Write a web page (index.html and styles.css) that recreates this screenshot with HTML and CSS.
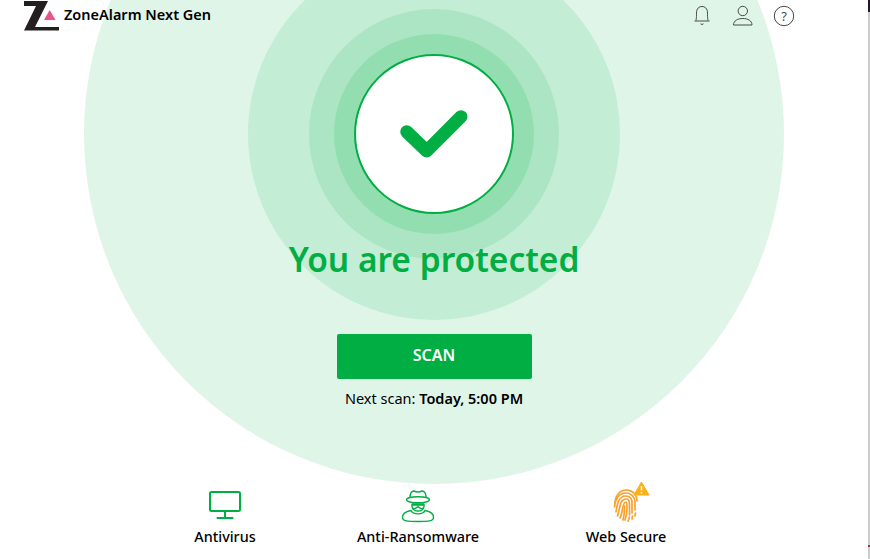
FILE: index.html
```html
<!DOCTYPE html>
<html lang="en">
  <head>
    <meta charset="UTF-8" />
    <meta name="viewport" content="width=device-width, initial-scale=1.0" />
    <title>ZoneAlarm Next Gen</title>
    <link rel="stylesheet" href="styles.css">
  </head>
  <body>
    <div class="app">
      <div class="rings">
        <div class="ring ring-1"></div>
        <div class="ring ring-2"></div>
        <div class="ring ring-3"></div>
        <div class="ring ring-4"></div>
        <div class="ring status-circle">
          <svg width="72" height="52" viewBox="0 0 72 52">
            <path d="M8.7 23.7 L28.7 43 L63 8.7" fill="none" stroke="#00ae44" stroke-width="13" stroke-linecap="round" stroke-linejoin="round" />
          </svg>
        </div>
      </div>

      <header class="topbar">
        <div class="brand">
          <svg class="logo" width="36" height="32" viewBox="0 0 36 32">
            <path d="M0 1 H24 L11 27 H35 V30.5 H0 L12 6 H0 Z" fill="#231f20" />
            <path d="M20 20 L25.7 10 L31.5 20 Z" fill="#e8558d" />
          </svg>
          <span class="brand-name">ZoneAlarm Next Gen</span>
        </div>
        <div class="top-icons">
          <svg width="18" height="22" viewBox="0 0 18 22" fill="none" stroke="#4a4a4a" stroke-width="1">
            <path d="M3 15.5 C3.5 13 3.5 10 3.5 8 C3.5 3.5 6 1.5 9 1.5 C12 1.5 14.5 3.5 14.5 8 C14.5 10 14.5 13 15 15.5" />
            <path d="M1.5 16 H16.5" />
            <path d="M7.5 18.8 Q9 20.2 10.5 18.8" />
          </svg>
          <svg width="22" height="22" viewBox="0 0 22 22" fill="none" stroke="#4a4a4a" stroke-width="1">
            <circle cx="10.8" cy="6" r="4.7" />
            <path d="M1.5 20 C1.5 15.5 6 13.5 10.8 13.5 C15.5 13.5 20 15.5 20 20 Z" />
          </svg>
          <svg width="22" height="22" viewBox="0 0 22 22" fill="none" stroke="#4a4a4a" stroke-width="1">
            <circle cx="11" cy="11" r="9.7" />
            <text x="11" y="15.5" class="help-mark">?</text>
          </svg>
        </div>
      </header>

      <main class="status">
        <h1 class="status-title">You are protected</h1>
        <button class="scan-btn">SCAN</button>
        <p class="next-scan">Next scan: <b>Today, 5:00 PM</b></p>
      </main>

      <nav class="features">
        <div class="feature">
          <div class="feature-icon">
            <svg width="34" height="30" viewBox="0 0 34 30" fill="none" stroke="#00ae44" stroke-width="2">
              <rect x="2" y="1" width="30" height="19" rx="1.5" />
              <path d="M17 20 V27 M8.7 27 H25.3" />
            </svg>
          </div>
          <span>Antivirus</span>
        </div>
        <div class="feature">
          <div class="feature-icon">
            <svg width="34" height="33" viewBox="0 0 34 33" fill="none" stroke="#00ae44" stroke-width="1.4">
              <path d="M9 8 C9 3 11 1 13 1 Q17 3 21 1 C23 1 25 3 25 8" />
              <ellipse cx="17" cy="9.8" rx="11.5" ry="3" />
              <path d="M11 14.5 H23 V16.5 C23 18.5 21 19 19.5 18.3 L17 16.5 L14.5 18.3 C13 19 11 18.5 11 16.5 Z" />
              <path d="M11 14.5 H23" stroke-width="2.4" />
              <path d="M11.5 18 C13 22 21 22 22.5 18" />
              <path d="M10 20.5 C5 21.5 1 24 1.5 28 C2 31 6 31.5 17 31.5 C28 31.5 32 31 32.5 28 C33 24 29 21.5 24 20.5 C22 25 12 25 10 20.5 Z" />
            </svg>
          </div>
          <span>Anti-Ransomware</span>
        </div>
        <div class="feature">
          <div class="feature-icon print-wrap">
            <svg width="26" height="34" viewBox="0 0 26 34" fill="none" stroke="#f9a12e" stroke-width="1.7" stroke-linecap="round">
              <path d="M2 13 C3 5 8 1 13 1 C19 1 24 5 24 12" />
              <path d="M1.5 18 C2 10 6 4 13 4 C18 4 22 8 22 13 V21" />
              <path d="M3 23 C4 16 5 7 13 7 C17 7 19 10 19 14 V24" />
              <path d="M4.5 27 C7 21 6 10 13 10 C16 10 16.5 12 16.5 15 V26" />
              <path d="M7 29 C10 24 9 13 13 13 C14 13 14 15 14 18 C14 23 13.5 27 12 31" />
              <path d="M10 31 C11.5 26 11.5 21 11.5 17" />
              <path d="M15 32 C16 30 16.5 29 16.5 28" />
              <path d="M19 30 L19.5 27 M22 27 L22.5 24" />
            </svg>
            <svg class="warn" width="17" height="15" viewBox="0 0 17 15">
              <path d="M8.5 1 L16 14 H1 Z" fill="#fbb216" stroke="#fbb216" stroke-linejoin="round" />
              <path d="M8.5 5 V9.5 M8.5 11 V12.5" stroke="#fff" stroke-width="1.5" />
            </svg>
          </div>
          <span>Web Secure</span>
        </div>
      </nav>

      <div class="window-edge">
        <div class="edge-top"></div>
        <div class="edge-mark"></div>
      </div>
    </div>
  </body>
</html>
```

FILE: styles.css
```css
html,
body {
  margin: 0;
  height: 100%;
  overflow: hidden;
}

body {
  background-color: #fff;
  font-family: "Noto Sans", "Open Sans", sans-serif;
  color: #000;
}

.app {
  position: relative;
  display: flex;
  flex-direction: column;
  width: 870px;
  height: 559px;
  overflow: hidden;
}

/* decorative circles sit behind everything */
.rings {
  position: absolute;
  left: 434px;
  top: 134px;
}

.ring {
  position: absolute;
  border-radius: 50%;
  transform: translate(-50%, -50%);
}

.ring-1 {
  width: 700px;
  height: 700px;
  background-color: #dff5e8;
}

.ring-2 {
  width: 372px;
  height: 372px;
  background-color: #c4edd5;
}

.ring-3 {
  width: 250px;
  height: 250px;
  background-color: #ace5c3;
}

.ring-4 {
  width: 200px;
  height: 200px;
  background-color: #93deb1;
}

.status-circle {
  display: flex;
  align-items: center;
  justify-content: center;
  box-sizing: border-box;
  width: 160px;
  height: 160px;
  background-color: #fff;
  border: 2.5px solid #00ae44;
}

.topbar {
  position: relative;
  display: flex;
  justify-content: space-between;
  height: 32px;
  padding: 0 75px 0 24px;
}

.brand {
  display: flex;
  align-items: flex-start;
  gap: 4px;
}

.brand-name {
  margin-top: 4px;
  font-size: 14.5px;
  font-weight: 600;
  line-height: 20px;
  color: #000;
}

.top-icons {
  display: flex;
  gap: 21px;
  padding-top: 5px;
}

.top-icons svg:last-child {
  margin-left: -2px;
}

.help-mark {
  font-family: "Noto Sans", sans-serif;
  font-size: 13px;
  text-anchor: middle;
  fill: #4a4a4a;
  stroke: none;
}

.status {
  position: relative;
  display: flex;
  flex-direction: column;
  align-items: center;
  width: 868px;
  padding-top: 204px;
}

.status-title {
  margin: 0;
  font-size: 33.5px;
  font-weight: 600;
  line-height: 46px;
  color: #00ae44;
}

.scan-btn {
  width: 195px;
  height: 45px;
  margin-top: 52px;
  padding: 0 0 3px;
  border: none;
  border-radius: 2px;
  background-color: #00ae44;
  font-family: inherit;
  font-size: 16px;
  font-weight: 600;
  color: #fff;
}

.next-scan {
  margin: 9px 0 0;
  font-size: 14.5px;
  line-height: 20px;
}

.next-scan b {
  font-weight: 600;
}

.features {
  position: relative;
  display: flex;
  gap: 69px;
  margin-top: 81px;
  padding-left: 163px;
}

.feature {
  display: flex;
  flex-direction: column;
  align-items: center;
  width: 124px;
  gap: 4px;
  font-size: 14.4px;
  font-weight: 500;
  line-height: 20px;
}

.feature:last-child {
  margin-left: 15px;
}

.feature-icon {
  display: flex;
  align-items: center;
  justify-content: center;
  height: 34px;
}

.feature-icon svg {
  display: block;
}

.print-wrap {
  position: relative;
}

.print-wrap .warn {
  position: absolute;
  left: 20px;
  top: -8px;
}

/* thin strip along the right side of the captured window */
.window-edge {
  position: absolute;
  top: 0;
  right: 0;
  bottom: 0;
  width: 2px;
  background-color: #ccc;
}

.edge-top {
  height: 12px;
  background-color: #2a1530;
}

.edge-mark {
  position: absolute;
  top: 545px;
  left: 0;
  width: 2px;
  height: 2px;
  background-color: #a03050;
}
```
